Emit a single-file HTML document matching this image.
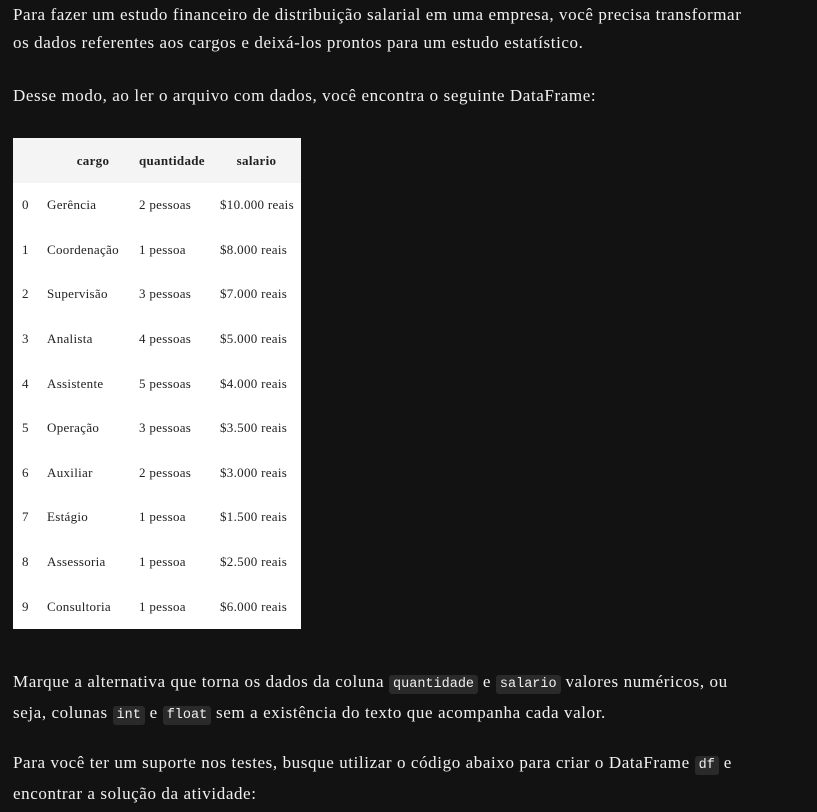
<!DOCTYPE html>
<html><head><meta charset="utf-8"><style>
body{margin:0;background:#121212;color:#f0f0f0;font-family:"Liberation Serif",serif;font-size:17px;letter-spacing:0.6px;width:817px;height:812px;overflow:hidden}
p{position:absolute;left:13px;margin:0;line-height:28px;width:790px}
code{font-family:"Liberation Mono",monospace;font-size:13.5px;letter-spacing:0;background:#2a2a2a;border-radius:3px;padding:2px 4px}
table{position:absolute;left:13px;top:138px;width:288px;border-collapse:collapse;background:#fff;color:#222;font-size:13px;letter-spacing:0.3px}
th{background:#f4f4f4;height:45px;font-weight:bold;text-align:center;padding:0}
td{height:44.6px;padding:0;white-space:nowrap}
</style></head><body>
<p style="top:1px">Para fazer um estudo financeiro de distribuição salarial em uma empresa, você precisa transformar<br>os dados referentes aos cargos e deixá-los prontos para um estudo estatístico.</p>
<p style="top:82px">Desse modo, ao ler o arquivo com dados, você encontra o seguinte DataFrame:</p>
<table>
<colgroup><col style="width:34px"><col style="width:92px"><col style="width:81px"><col></colgroup>
<tr><th></th><th>cargo</th><th style="text-align:left">quantidade</th><th style="padding-right:8px">salario</th></tr>
<tr><td style="padding-left:9px">0</td><td>Gerência</td><td>2 pessoas</td><td>$10.000 reais</td></tr>
<tr><td style="padding-left:9px">1</td><td>Coordenação</td><td>1 pessoa</td><td>$8.000 reais</td></tr>
<tr><td style="padding-left:9px">2</td><td>Supervisão</td><td>3 pessoas</td><td>$7.000 reais</td></tr>
<tr><td style="padding-left:9px">3</td><td>Analista</td><td>4 pessoas</td><td>$5.000 reais</td></tr>
<tr><td style="padding-left:9px">4</td><td>Assistente</td><td>5 pessoas</td><td>$4.000 reais</td></tr>
<tr><td style="padding-left:9px">5</td><td>Operação</td><td>3 pessoas</td><td>$3.500 reais</td></tr>
<tr><td style="padding-left:9px">6</td><td>Auxiliar</td><td>2 pessoas</td><td>$3.000 reais</td></tr>
<tr><td style="padding-left:9px">7</td><td>Estágio</td><td>1 pessoa</td><td>$1.500 reais</td></tr>
<tr><td style="padding-left:9px">8</td><td>Assessoria</td><td>1 pessoa</td><td>$2.500 reais</td></tr>
<tr><td style="padding-left:9px">9</td><td>Consultoria</td><td>1 pessoa</td><td>$6.000 reais</td></tr>
</table>
<p style="top:668px">Marque a alternativa que torna os dados da coluna <code>quantidade</code> e <code>salario</code> valores numéricos, ou<br>seja, colunas <code>int</code> e <code>float</code> sem a existência do texto que acompanha cada valor.</p>
<p style="top:749px">Para você ter um suporte nos testes, busque utilizar o código abaixo para criar o DataFrame <code>df</code> e<br>encontrar a solução da atividade:</p>
</body></html>
